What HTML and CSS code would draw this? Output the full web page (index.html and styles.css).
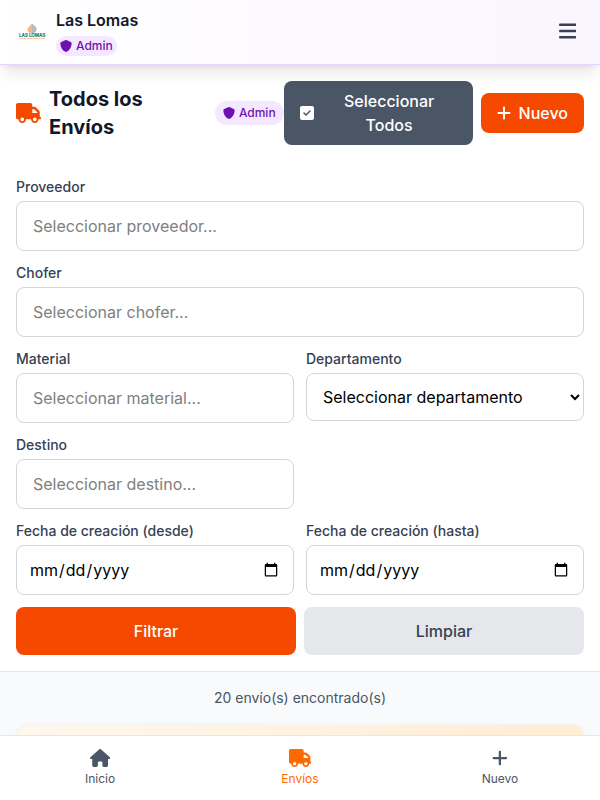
FILE: index.html
```html
<!DOCTYPE html>
<html lang="es">
<head>
    <meta charset="UTF-8">
    <meta name="viewport" content="width=device-width, initial-scale=1.0">
    <title>Las Lomas - Envíos</title>
    <link rel="stylesheet" href="styles.css">
</head>
<body>

    <!-- Iconos compartidos -->
    <svg class="sprite" aria-hidden="true">
        <symbol id="shield" viewBox="0 0 512 512"><path d="M256 0c4.6 0 9.2 1 13.4 2.9L457.7 82.8c22 9.3 38.4 31 38.3 57.2c-.5 99.2-41.3 280.7-213.6 363.2c-16.7 8-36.1 8-52.8 0C57.3 420.7 16.5 239.2 16 140c-.1-26.2 16.3-47.9 38.3-57.2L242.7 2.9C246.8 1 251.4 0 256 0z"/></symbol>
        <symbol id="truck" viewBox="0 0 640 512"><path d="M48 0C21.5 0 0 21.5 0 48V368c0 26.5 21.5 48 48 48H64c0 53 43 96 96 96s96-43 96-96H384c0 53 43 96 96 96s96-43 96-96h32c17.7 0 32-14.3 32-32s-14.3-32-32-32V237.3c0-17-6.7-33.3-18.7-45.3L512 114.7c-12-12-28.3-18.7-45.3-18.7H416V48c0-26.5-21.5-48-48-48H48zM416 160h50.7L544 237.3V256H416V160zM112 416a48 48 0 1 1 96 0 48 48 0 1 1-96 0zm368-48a48 48 0 1 1 0 96 48 48 0 1 1 0-96z"/></symbol>
        <symbol id="plus" viewBox="0 0 448 512"><path d="M256 80c0-17.7-14.3-32-32-32s-32 14.3-32 32V224H48c-17.7 0-32 14.3-32 32s14.3 32 32 32H192V432c0 17.7 14.3 32 32 32s32-14.3 32-32V288H400c17.7 0 32-14.3 32-32s-14.3-32-32-32H256V80z"/></symbol>
    </svg>

    <header class="topbar">
        <svg class="logo" viewBox="0 0 32 32">
            <path fill="#f8b583" d="M16 7.500l-4.500 5v2.500l3 2.500h1.500z"/>
            <path fill="#bdb9b6" d="M16 7.500l4.500 4v3.500l-3 2.500h-1.500z"/>
            <text x="3" y="21" textLength="26.500" lengthAdjust="spacingAndGlyphs">LAS LOMAS</text>
            <path stroke="#f9cfae" stroke-width="1" d="M3 22.500h26"/>
        </svg>
        <div class="brand">
            <span class="brand-name">Las Lomas</span>
            <span class="badge badge-sm"><svg><use href="#shield"/></svg>Admin</span>
        </div>
        <button class="menu-btn" aria-label="Menú">
            <svg viewBox="0 0 448 512"><path d="M0 96C0 78.3 14.3 64 32 64H416c17.7 0 32 14.3 32 32s-14.3 32-32 32H32C14.3 128 0 113.7 0 96zM0 256c0-17.7 14.3-32 32-32H416c17.7 0 32 14.3 32 32s-14.3 32-32 32H32c-17.7 0-32-14.3-32-32zM448 416c0 17.7-14.3 32-32 32H32c-17.7 0-32-14.3-32-32s14.3-32 32-32H416c17.7 0 32 14.3 32 32z"/></svg>
        </button>
    </header>

    <main>
        <section class="filters">
            <div class="title-row">
                <div class="title">
                    <svg><use href="#truck"/></svg>
                    <h1>Todos los Envíos</h1>
                    <span class="badge"><svg><use href="#shield"/></svg>Admin</span>
                </div>
                <div class="actions">
                    <button class="btn btn-select">
                        <svg viewBox="0 0 448 512"><path d="M64 32C28.7 32 0 60.7 0 96V416c0 35.3 28.7 64 64 64H384c35.3 0 64-28.7 64-64V96c0-35.3-28.7-64-64-64H64zM337 209L209 337c-9.4 9.4-24.6 9.4-33.9 0l-64-64c-9.4-9.4-9.4-24.6 0-33.9s24.6-9.4 33.9 0l47 47L303 175c9.4-9.4 24.6-9.4 33.900 0s9.400 24.600 0 33.900z"/></svg>
                        <span>Seleccionar Todos</span>
                    </button>
                    <button class="btn btn-new"><svg><use href="#plus"/></svg>Nuevo</button>
                </div>
            </div>

            <form class="form" onsubmit="event.preventDefault()">
                <div class="field full">
                    <label for="proveedor">Proveedor</label>
                    <input type="text" id="proveedor" placeholder="Seleccionar proveedor...">
                </div>
                <div class="field full">
                    <label for="chofer">Chofer</label>
                    <input type="text" id="chofer" placeholder="Seleccionar chofer...">
                </div>
                <div class="field">
                    <label for="material">Material</label>
                    <input type="text" id="material" placeholder="Seleccionar material...">
                </div>
                <div class="field">
                    <label for="departamento">Departamento</label>
                    <select id="departamento">
                        <option>Seleccionar departamento</option>
                    </select>
                </div>
                <div class="field first">
                    <label for="destino">Destino</label>
                    <input type="text" id="destino" placeholder="Seleccionar destino...">
                </div>
                <div class="field first">
                    <label for="desde">Fecha de creación (desde)</label>
                    <input type="date" id="desde">
                </div>
                <div class="field">
                    <label for="hasta">Fecha de creación (hasta)</label>
                    <input type="date" id="hasta">
                </div>
                <div class="form-buttons full">
                    <button type="submit" class="btn-filter">Filtrar</button>
                    <button type="reset" class="btn-clear">Limpiar</button>
                </div>
            </form>
        </section>

        <section class="results">
            <p>20 envío(s) encontrado(s)</p>
            <div class="card"></div>
        </section>
    </main>

    <nav class="bottom-nav">
        <a href="#">
            <svg viewBox="0 0 576 512"><path d="M575.8 255.5c0 18-15 32.1-32 32.1h-32l.7 160.2c0 2.7-.2 5.4-.5 8.1V472c0 22.1-17.9 40-40 40H392c-22.1 0-40-17.9-40-40V384c0-17.7-14.3-32-32-32H256c-17.7 0-32 14.3-32 32v88c0 22.1-17.9 40-40 40H104c-22.1 0-40-17.9-40-40V287.6H32c-18 0-32-14-32-32.1c0-9 3-17 10-24L266.400 8c7-7 15-8 22-8s15 2 21 7L564.800 231.500c8 7 12 15 11 24z"/></svg>
            Inicio
        </a>
        <a href="#" class="active"><svg class="nav-truck"><use href="#truck"/></svg>Envíos</a>
        <a href="#"><svg class="nav-plus"><use href="#plus"/></svg>Nuevo</a>
    </nav>

</body>
</html>
```
FILE: styles.css
```css
* { margin: 0; padding: 0; box-sizing: border-box; }
body {
    height: 800px;
    overflow: hidden;
    background: #f9fafb;
    color: #101828;
    font-family: Inter, sans-serif;
    font-size: 16px;
    line-height: 24px;
}
button, input, select { font: inherit; }
button { border: none; cursor: pointer; }
svg { fill: currentColor; flex-shrink: 0; }
.sprite { position: absolute; width: 0; height: 0; }

/* Header */
.topbar {
    position: relative;
    z-index: 2;
    display: flex;
    align-items: center;
    height: 65px;
    padding: 0 24px 0 16px;
    background: linear-gradient(to right, #fff, #faf5ff);
    border-bottom: 1px solid #e9d4ff;
    box-shadow: 0 10px 15px -3px rgba(0, 0, 0, 0.1), 0 4px 6px -4px rgba(0, 0, 0, 0.1);
}
.logo { width: 32px; height: 32px; margin-right: 8px; overflow: visible; }
.logo text { font-size: 5px; font-weight: 800; fill: #27825b; }
.brand {
    display: flex;
    flex-direction: column;
    align-items: flex-start;
    gap: 4px;
    flex: 1;
}
.brand-name { font-weight: 600; line-height: 24px; }
.badge {
    display: inline-flex;
    align-items: center;
    gap: 4px;
    padding: 4px 8px;
    border-radius: 20px;
    background: #f3e8ff;
    color: #6e11b0;
    font-size: 12px;
    line-height: 16px;
    font-weight: 500;
}
.badge svg { width: 12px; height: 12px; }
.badge-sm { padding: 2px 4px; }
.menu-btn { display: flex; padding-bottom: 3px; background: none; color: #364153; }
.menu-btn svg { width: 17.5px; height: 20px; }

/* Titulo y acciones */
.filters {
    padding: 16px;
    background: #fff;
    border-bottom: 1px solid #e5e7eb;
}
.title-row {
    display: flex;
    align-items: center;
    justify-content: space-between;
    margin-bottom: 32px;
}
.title { display: flex; align-items: center; gap: 8px; flex: 1; }
.title > svg { width: 25px; height: 20px; color: #f54900; }
.title h1 { flex: 1; max-width: 120px; font-size: 20px; line-height: 28px; font-weight: 700; }
.title .badge { margin-left: auto; }
.actions { display: flex; align-items: center; gap: 8px; }
.btn {
    display: flex;
    align-items: center;
    justify-content: center;
    gap: 8px;
    padding: 8px 16px;
    border-radius: 8px;
    color: #fff;
    font-weight: 500;
}
.btn svg { width: 14px; height: 16px; }
.btn-select { width: 189px; background: #4a5565; }
.btn-select span { flex: 1; }
.btn-new { width: 103.4px; background: #f54900; }

/* Filtros */
.form { display: grid; grid-template-columns: 1fr 1fr; gap: 12px; }
.full { grid-column: 1 / -1; }
.first { grid-column: 1; }
.field { display: flex; flex-direction: column; gap: 4px; min-width: 0; }
.field label { font-size: 14px; line-height: 20px; font-weight: 500; color: #364153; }
.field input, .field select {
    width: 100%;
    height: 50px;
    padding: 12px 16px;
    border: 1px solid #d1d5dc;
    border-radius: 8px;
    background: #fff;
    color: #000;
}
.field input::placeholder { color: #808080; opacity: 1; }
.field input[type="date"] { padding: 12px; }
.field select { height: 48px; padding: 8px 0 8px 12px; }
.form-buttons { display: flex; gap: 8px; }
.form-buttons button { flex: 1; height: 48px; border-radius: 8px; font-weight: 500; }
.btn-filter { background: #f54900; color: #fff; }
.btn-clear { background: #e5e7eb; color: #364153; }

/* Resultados */
.results { height: 128px; padding: 16px; overflow: hidden; }
.results p { text-align: center; font-size: 14px; line-height: 20px; color: #4a5565; margin-bottom: 16px; }
.card {
    height: 70px;
    border: 1px solid #f3f4f6;
    border-radius: 12px;
    background: linear-gradient(to right, #fff7ed, #ffedd4);
    box-shadow: 0 1px 3px rgba(0, 0, 0, 0.1);
}

/* Menu inferior */
.bottom-nav {
    position: fixed;
    left: 0;
    right: 0;
    bottom: 0;
    display: flex;
    height: 65px;
    background: #fff;
    border-top: 1px solid #e5e7eb;
}
.bottom-nav a {
    flex: 1;
    display: flex;
    flex-direction: column;
    align-items: center;
    gap: 4px;
    padding-top: 13px;
    color: #4a5565;
    font-size: 12px;
    line-height: 16px;
    text-decoration: none;
}
.bottom-nav svg { width: 20.25px; height: 18px; }
.bottom-nav .nav-truck { width: 22.5px; }
.bottom-nav .nav-plus { width: 15.75px; }
.bottom-nav .active { color: #ff6900; }
```
